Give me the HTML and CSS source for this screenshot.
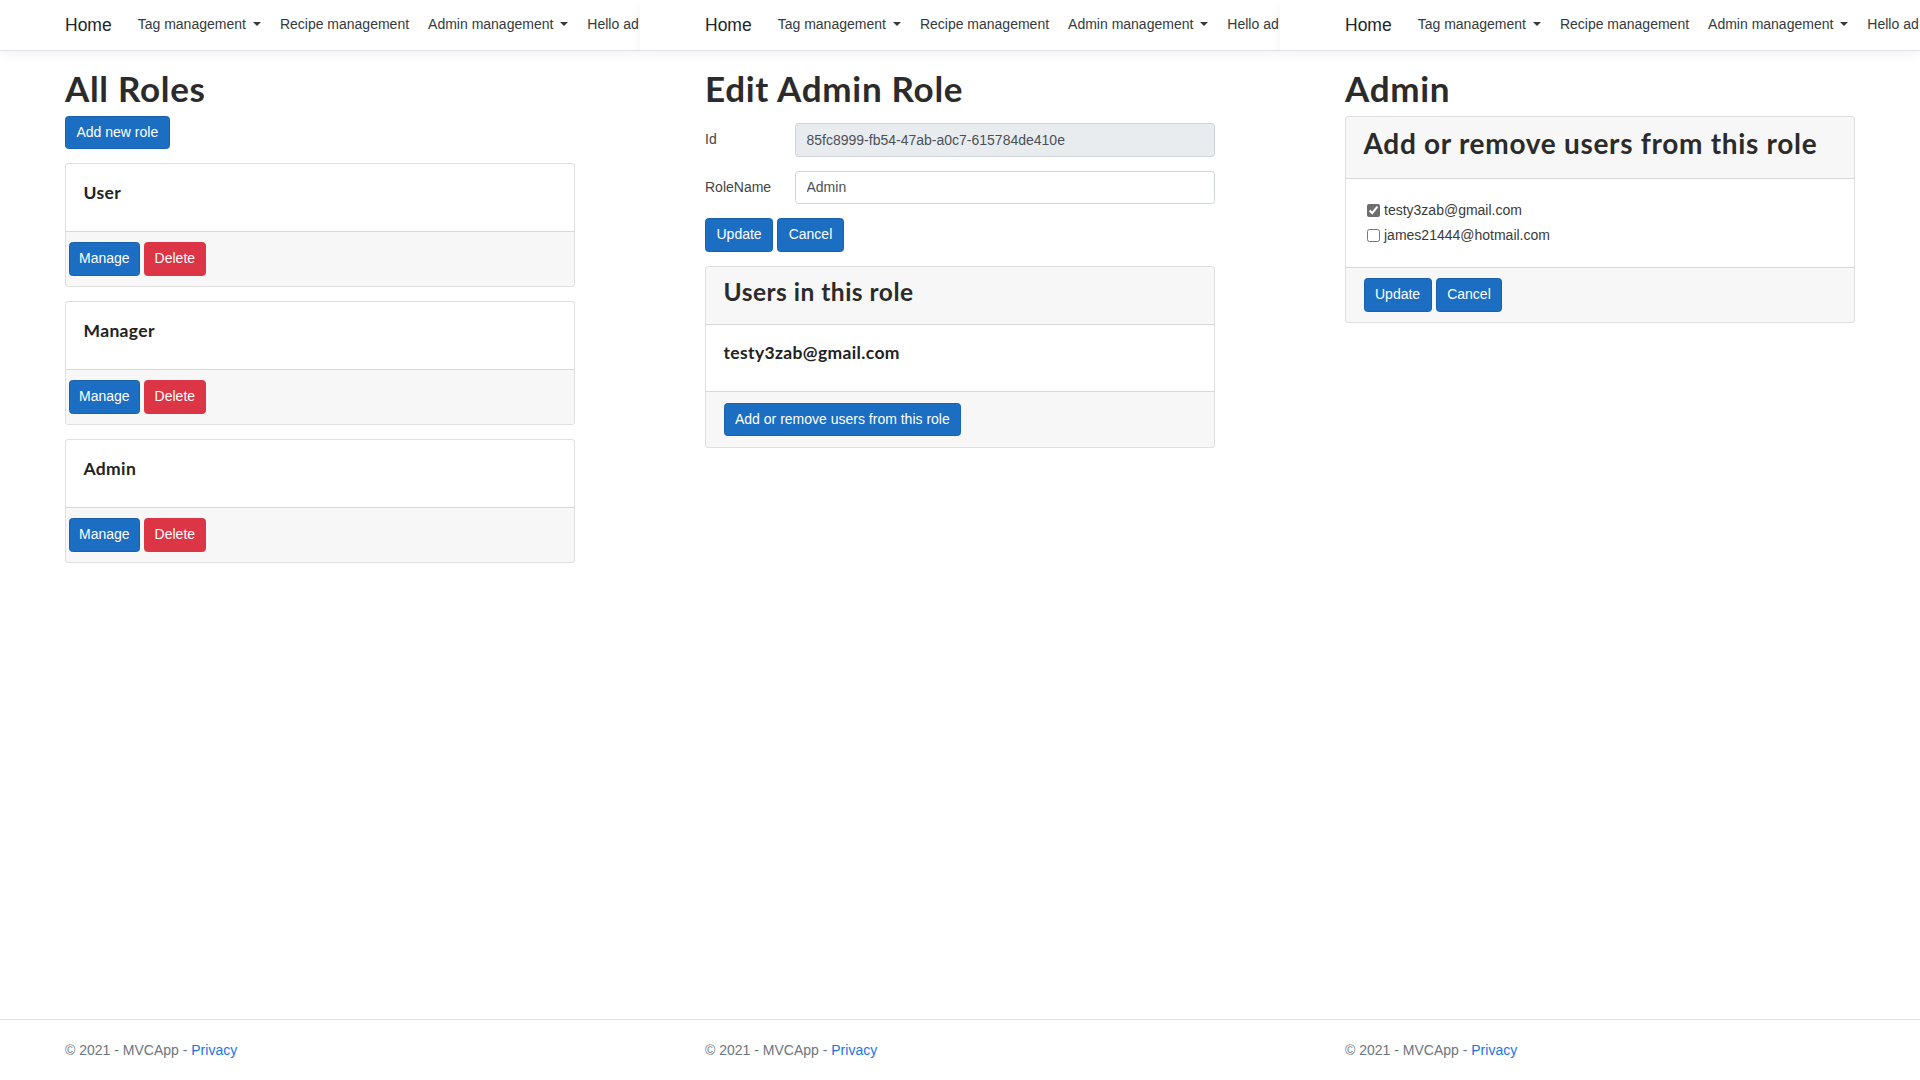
FILE: index.html
```html
<!DOCTYPE html>
<html lang="en">
<head>
<meta charset="utf-8">
<title>MVCApp</title>
<link rel="stylesheet" href="styles.css">
</head>
<body>
<div class="screens">

  <section class="screen">
    <header class="navbar">
      <div class="container nav-inner">
        <a class="brand" href="#">Home</a>
        <a class="nav-link dropdown" href="#">Tag management</a>
        <a class="nav-link" href="#">Recipe management</a>
        <a class="nav-link dropdown" href="#">Admin management</a>
        <a class="nav-link" href="#">Hello ad</a>
      </div>
    </header>
    <main class="container main">
      <h1 class="page-title">All Roles</h1>
      <div class="top-actions">
        <a class="btn btn-primary" href="#">Add new role</a>
      </div>
      <div class="card">
        <div class="card-body"><h5 class="card-title">User</h5></div>
        <div class="card-footer tight btn-row">
          <a class="btn btn-primary" href="#">Manage</a>
          <a class="btn btn-danger" href="#">Delete</a>
        </div>
      </div>
      <div class="card">
        <div class="card-body"><h5 class="card-title">Manager</h5></div>
        <div class="card-footer tight btn-row">
          <a class="btn btn-primary" href="#">Manage</a>
          <a class="btn btn-danger" href="#">Delete</a>
        </div>
      </div>
      <div class="card">
        <div class="card-body"><h5 class="card-title">Admin</h5></div>
        <div class="card-footer tight btn-row">
          <a class="btn btn-primary" href="#">Manage</a>
          <a class="btn btn-danger" href="#">Delete</a>
        </div>
      </div>
    </main>
    <footer class="footer">
      <div class="container">© 2021 - MVCApp - <a class="footer-link" href="#">Privacy</a></div>
    </footer>
  </section>

  <section class="screen">
    <header class="navbar">
      <div class="container nav-inner">
        <a class="brand" href="#">Home</a>
        <a class="nav-link dropdown" href="#">Tag management</a>
        <a class="nav-link" href="#">Recipe management</a>
        <a class="nav-link dropdown" href="#">Admin management</a>
        <a class="nav-link" href="#">Hello ad</a>
      </div>
    </header>
    <main class="container main">
      <h1 class="page-title form-title">Edit Admin Role</h1>
      <form class="role-form">
        <div class="form-row">
          <label class="col-label" for="role-id">Id</label>
          <input class="form-control" id="role-id" value="85fc8999-fb54-47ab-a0c7-615784de410e" disabled>
        </div>
        <div class="form-row">
          <label class="col-label" for="role-name">RoleName</label>
          <input class="form-control" id="role-name" value="Admin">
        </div>
        <div class="form-group btn-row">
          <button type="button" class="btn btn-primary">Update</button>
          <a class="btn btn-primary" href="#">Cancel</a>
        </div>
      </form>
      <div class="card">
        <div class="card-header"><h3 class="h3">Users in this role</h3></div>
        <div class="card-body"><h5 class="card-title">testy3zab@gmail.com</h5></div>
        <div class="card-footer">
          <a class="btn btn-primary" href="#">Add or remove users from this role</a>
        </div>
      </div>
    </main>
    <footer class="footer">
      <div class="container">© 2021 - MVCApp - <a class="footer-link" href="#">Privacy</a></div>
    </footer>
  </section>

  <section class="screen">
    <header class="navbar">
      <div class="container nav-inner">
        <a class="brand" href="#">Home</a>
        <a class="nav-link dropdown" href="#">Tag management</a>
        <a class="nav-link" href="#">Recipe management</a>
        <a class="nav-link dropdown" href="#">Admin management</a>
        <a class="nav-link" href="#">Hello ad</a>
      </div>
    </header>
    <main class="container main">
      <h1 class="page-title">Admin</h1>
      <div class="card">
        <div class="card-header"><h2 class="h2">Add or remove users from this role</h2></div>
        <div class="card-body">
          <label class="form-check"><input type="checkbox" checked> <span>testy3zab@gmail.com</span></label>
          <label class="form-check"><input type="checkbox"> <span>james21444@hotmail.com</span></label>
        </div>
        <div class="card-footer btn-row">
          <button type="button" class="btn btn-primary">Update</button>
          <a class="btn btn-primary" href="#">Cancel</a>
        </div>
      </div>
    </main>
    <footer class="footer">
      <div class="container">© 2021 - MVCApp - <a class="footer-link" href="#">Privacy</a></div>
    </footer>
  </section>

</div>
</body>
</html>
```

FILE: styles.css
```css
* { box-sizing: border-box; }

html, body {
  margin: 0;
  padding: 0;
  background: #fff;
}

body {
  width: 1920px;
  height: 1080px;
  overflow: hidden;
  font-family: "Liberation Sans", Arial, sans-serif;
  font-size: 14px;
  line-height: 1.5;
  color: #212529;
}

.screens {
  display: flex;
  width: 1920px;
  height: 1080px;
}

.screen {
  width: 640px;
  height: 1080px;
  flex: 0 0 640px;
  display: flex;
  flex-direction: column;
}

.container {
  width: 100%;
  max-width: 540px;
  padding: 0 15px;
  margin: 0 auto;
}

/* navbar */
.navbar {
  position: relative;
  z-index: 1;
  background: #fff;
  height: 51px;
  padding: 7.5px 0;
  border-bottom: 1px solid #dee2e6;
  box-shadow: 0 3.5px 10.5px rgba(0, 0, 0, 0.05);
  margin-bottom: 15.5px;
}

.nav-inner {
  display: flex;
  align-items: center;
  height: 35px;
  white-space: nowrap;
}

.brand {
  font-size: 17.5px;
  line-height: 26px;
  padding: 4px 0;
  margin-right: 16.5px;
  color: #212529;
  text-decoration: none;
}

.nav-link {
  font-size: 14px;
  line-height: 21px;
  padding: 7px 9.5px;
  margin-top: -1.5px;
  color: #343a40;
  text-decoration: none;
}

.nav-link.dropdown::after {
  content: "";
  display: inline-block;
  margin-left: 7px;
  vertical-align: 3px;
  border-top: 4.2px solid #343a40;
  border-left: 4.2px solid transparent;
  border-right: 4.2px solid transparent;
}

/* main */
.main {
  flex: 1;
}

.page-title {
  font-family: "Lato", "Liberation Sans", sans-serif;
  font-weight: 700;
  font-size: 35px;
  line-height: 42px;
  letter-spacing: 0.02em;
  margin: 0 0 7px;
  color: #2b2b2b;
}

.form-title {
  margin-bottom: 14.5px;
}

.top-actions {
  margin-bottom: 14px;
}

.btn {
  display: inline-block;
  font-family: "Liberation Sans", Arial, sans-serif;
  font-size: 14px;
  line-height: 21px;
  padding: 5.25px 10.5px;
  border: 1px solid transparent;
  border-radius: 3.5px;
  color: #fff;
  text-decoration: none;
  cursor: pointer;
  white-space: nowrap;
}

.btn-primary {
  background: #1b6ec2;
  border-color: #1861ac;
}

.btn-danger {
  background: #dc3545;
  border-color: #dc3545;
}

.btn-row {
  display: flex;
  gap: 4px;
}

/* cards */
.card {
  border: 1px solid rgba(0, 0, 0, 0.125);
  border-radius: 3.5px;
  margin-bottom: 14px;
  background: #fff;
}

.card-header {
  padding: 10.5px 17.5px;
  background: #f7f7f7;
  border-bottom: 1px solid rgba(0, 0, 0, 0.125);
  border-radius: 3.5px 3.5px 0 0;
}

.card-body {
  padding: 17.5px;
}

.card-title {
  font-family: "Lato", "Liberation Sans", sans-serif;
  font-weight: 700;
  font-size: 17.5px;
  line-height: 21px;
  letter-spacing: 0.02em;
  margin: 0 0 10.5px;
  color: #222;
}

.card-footer {
  padding: 10.5px 17.5px;
  background: #f7f7f7;
  border-top: 1px solid rgba(0, 0, 0, 0.125);
  border-radius: 0 0 3.5px 3.5px;
}

.card-footer.tight {
  padding-left: 2.5px;
  padding-right: 2.5px;
}

.card-footer.tight .btn {
  padding-left: 9.5px;
  padding-right: 9.5px;
}

.h3 {
  font-family: "Lato", "Liberation Sans", sans-serif;
  font-weight: 700;
  font-size: 24.5px;
  line-height: 29.4px;
  letter-spacing: 0.02em;
  margin: 0 0 7px;
  color: #2b2b2b;
}

.h2 {
  font-family: "Lato", "Liberation Sans", sans-serif;
  font-weight: 700;
  font-size: 28px;
  line-height: 33.6px;
  letter-spacing: 0.025em;
  margin: 0 0 7px;
  color: #2b2b2b;
}

/* form */
.form-row {
  display: grid;
  grid-template-columns: 90px 1fr;
  margin-bottom: 14px;
}

.col-label {
  padding: 6.25px 0;
  line-height: 21px;
  color: #444;
}

.form-control {
  display: block;
  width: 100%;
  height: 33.5px;
  padding: 5.25px 10.5px;
  font-family: "Liberation Sans", Arial, sans-serif;
  font-size: 14px;
  line-height: 21px;
  color: #495057;
  background: #fff;
  border: 1px solid #ced4da;
  border-radius: 3.5px;
}

.form-control:disabled {
  background: #e9ecef;
  opacity: 1;
}

.form-group {
  margin-bottom: 14px;
}

.form-check {
  display: flex;
  align-items: center;
  gap: 4px;
  margin: 3.5px;
  line-height: 21px;
  color: #3a3a3a;
}

.form-check input {
  width: 13px;
  height: 13px;
  margin: 0;
  accent-color: #6e6e6e;
}

/* footer */
.footer {
  height: 61px;
  border-top: 1px solid #dee2e6;
  line-height: 61px;
  color: #6c757d;
  white-space: nowrap;
  overflow: hidden;
}

.footer-link {
  color: #1a73e8;
  text-decoration: none;
}
```
